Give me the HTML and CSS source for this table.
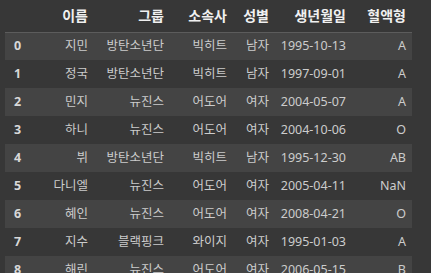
FILE: index.html
```html
<!DOCTYPE html>
<html lang="ko">
<head>
<meta charset="utf-8">
<link rel="stylesheet" href="styles.css">
</head>
<body>
<div class="wrap">
<table class="df">
  <colgroup>
    <col class="c-idx"><col class="c-name"><col class="c-group"><col class="c-agency"><col class="c-sex"><col class="c-birth"><col class="c-blood">
  </colgroup>
  <thead>
    <tr><th></th><th>이름</th><th>그룹</th><th>소속사</th><th>성별</th><th>생년월일</th><th>혈액형</th></tr>
  </thead>
  <tbody>
    <tr><th>0</th><td>지민</td><td>방탄소년단</td><td>빅히트</td><td>남자</td><td>1995-10-13</td><td>A</td></tr>
    <tr><th>1</th><td>정국</td><td>방탄소년단</td><td>빅히트</td><td>남자</td><td>1997-09-01</td><td>A</td></tr>
    <tr><th>2</th><td>민지</td><td>뉴진스</td><td>어도어</td><td>여자</td><td>2004-05-07</td><td>A</td></tr>
    <tr><th>3</th><td>하니</td><td>뉴진스</td><td>어도어</td><td>여자</td><td>2004-10-06</td><td>O</td></tr>
    <tr><th>4</th><td>뷔</td><td>방탄소년단</td><td>빅히트</td><td>남자</td><td>1995-12-30</td><td>AB</td></tr>
    <tr><th>5</th><td>다니엘</td><td>뉴진스</td><td>어도어</td><td>여자</td><td>2005-04-11</td><td>NaN</td></tr>
    <tr><th>6</th><td>혜인</td><td>뉴진스</td><td>어도어</td><td>여자</td><td>2008-04-21</td><td>O</td></tr>
    <tr><th>7</th><td>지수</td><td>블랙핑크</td><td>와이지</td><td>여자</td><td>1995-01-03</td><td>A</td></tr>
    <tr><th>8</th><td>해린</td><td>뉴진스</td><td>어도어</td><td>여자</td><td>2006-05-15</td><td>B</td></tr>
  </tbody>
</table>
</div>
</body>
</html>
```

FILE: styles.css
```css
html, body {
  margin: 0;
  padding: 0;
  background: #373737;
  overflow: hidden;
}
.wrap {
  padding: 0 0 0 5px;
}
.df {
  border-collapse: collapse;
  border-spacing: 0;
  table-layout: fixed;
  width: 407px;
  font-family: "Noto Sans", "Noto Sans CJK KR", sans-serif;
  color: #cccccc;
}
.c-idx { width: 35px; }
.c-name { width: 54px; }
.c-group { width: 76px; }
.c-agency { width: 63px; }
.c-sex { width: 42px; }
.c-birth { width: 77px; }
.c-blood { width: 60px; }
.df thead th {
  height: 32px;
  padding: 1px 6px 0 0;
  box-sizing: border-box;
  text-align: right;
  font-size: 14px;
  font-weight: 700;
  color: #f0f0f0;
  border-bottom: 1px solid #5c5c5c;
  white-space: nowrap;
  line-height: 16px;
}
.df tbody tr {
  height: 28px;
}
.df tbody tr:nth-child(odd) {
  background: #444444;
}
.df td, .df tbody th {
  padding: 0 6px 0 0;
  height: 28px;
  box-sizing: border-box;
  font-size: 12.5px;
  line-height: 16px;
  text-align: right;
  white-space: nowrap;
  vertical-align: middle;
}
.df tbody th {
  text-align: left;
  padding-left: 9px;
  font-weight: 700;
  color: #d8d8d8;
}
```
